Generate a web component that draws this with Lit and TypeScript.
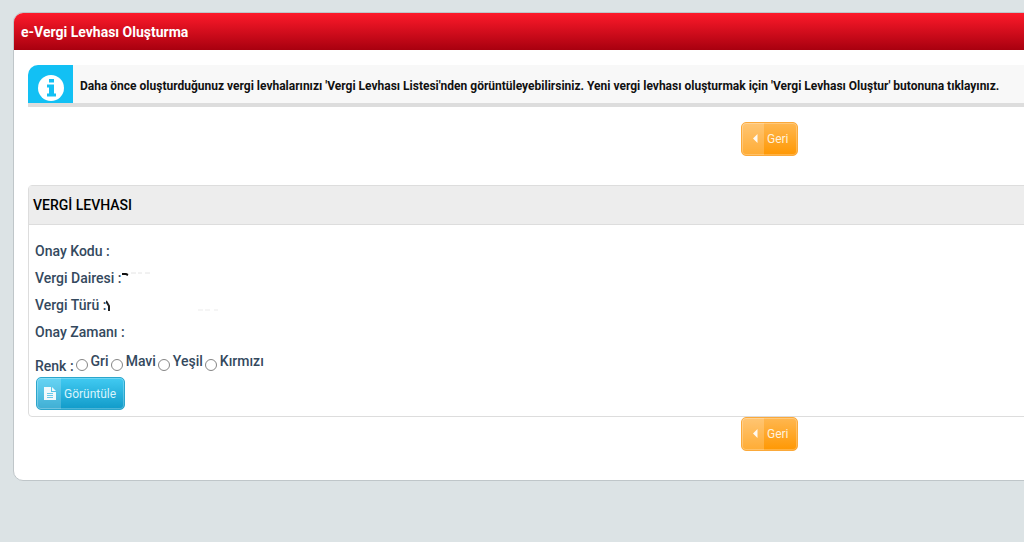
import { LitElement, html, css, svg } from "lit";
import { customElement, property } from "lit/decorators.js";

const arrowIcon = svg`<path d="M10.5 3 L6 7.500 L10.500 12 Z" fill="#fff"/>`;
const documentIcon = svg`<path d="M2 1 H9 V6 H14 V14 H2 Z M10 1 L14 5 H10 Z" fill="#fff"/><path d="M5 7.500 H11 M5 9.500 H11 M5 11.500 H11" stroke="#6fcbea" stroke-width="1"/>`;

@customElement("icon-button")
export class IconButton extends LitElement {
  @property() label = "";
  @property() tone = "orange";

  static styles = css`
    :host { display: inline-flex; }
    button {
      display: flex;
      align-items: stretch;
      height: 34px;
      padding: 0;
      border: 1px solid #fba93a;
      border-radius: 5px;
      overflow: hidden;
      background: linear-gradient(#ffb750, #ff9803);
      box-shadow: inset 0 0 0 1px rgba(255, 255, 255, 0.25);
      color: #fff1dc;
      font: 400 12px Roboto, sans-serif;
      cursor: pointer;
    }
    .blue {
      height: 33px;
      border-color: #2ba6cc;
      background: linear-gradient(#41caf2, #119bc9);
      color: #d9f4fc;
    }
    .icon {
      display: flex;
      align-items: center;
      justify-content: center;
      width: 22px;
      background: rgba(255, 255, 255, 0.2);
    }
    .blue .icon { padding-left: 2px; }
    svg { width: 16px; height: 16px; opacity: 0.92; }
    .orange svg { padding-left: 4px; }
    .text { display: flex; align-items: center; padding: 0 8px 0 3px; }
  `;

  render() {
    return html`<button type="button" class=${this.tone}>
      <span class="icon"><svg viewBox="0 0 16 16" aria-hidden="true">${this.tone === "blue" ? documentIcon : arrowIcon}</svg></span>
      <span class="text">${this.label}</span>
    </button>`;
  }
}

@customElement("app-root")
export class AppRoot extends LitElement {
  static styles = css`
    :host {
      display: block;
      box-sizing: border-box;
      min-height: 100vh;
      padding: 12px 0 24px 13px;
      overflow: hidden;
      background: #dce3e5;
      font-family: Roboto, sans-serif;
      color: #34495e;
    }
    * { box-sizing: border-box; }
    .panel {
      width: calc(150% - 4px);
      border: 1px solid #bfc6c9;
      border-radius: 10px;
      background: #fff;
      overflow: hidden;
    }
    h1 {
      margin: 0;
      padding: 0 7px;
      font-size: 14px;
      font-weight: 700;
      line-height: 38px;
      height: 37px;
      color: #fff;
      background: linear-gradient(#fd1a2a, #a8000f);
    }
    .body { padding: 15px 14px 29px; }
    .info {
      display: flex;
      height: 42px;
      border-bottom: 4px solid #ddd;
      border-top-left-radius: 10px;
      overflow: hidden;
      background: #f8f8f8;
      color: #111;
      font-size: 12px;
      font-weight: 700;
    }
    .badge {
      display: flex;
      align-items: end;
      justify-content: center;
      width: 45px;
      padding-bottom: 2px;
      background: #12c0f4;
    }
    .badge svg { width: 26px; height: 26px; }
    .info p { margin: 0; padding-left: 7px; line-height: 42px; white-space: nowrap; }
    .actions { display: flex; justify-content: center; }
    .top { padding: 15px 0 29px; }
    section { border: 1px solid #ddd; border-radius: 4px; }
    h2 {
      margin: 0;
      padding: 0 4px;
      font-size: 14px;
      font-weight: 500;
      line-height: 38px;
      color: #000;
      background: #ededed;
      border-bottom: 1px solid #ddd;
    }
    .fields { padding: 13px 6px 6px; font-size: 14px; font-weight: 500; }
    dl { margin: 0; }
    .row { display: flex; height: 27px; line-height: 27px; }
    dd { margin: 0; }
    dd svg { display: block; width: 120px; height: 27px; }
    fieldset { display: flex; height: 31px; margin: 0; padding: 0; border: 0; }
    .caption { padding-right: 2px; line-height: 41px; }
    .choice { display: flex; padding-right: 2px; line-height: 30px; }
    input {
      appearance: none;
      width: 12px;
      height: 12px;
      margin: 13px 3px 0 0;
      border: 1px solid #858585;
      border-radius: 50%;
      background: #fff;
    }
    input:checked { background: radial-gradient(#34495e 40%, #fff 45%); }
    .submit { display: flex; padding-left: 1px; }
  `;

  render() {
    return html`
      <main class="panel">
        <h1>e-Vergi Levhası Oluşturma</h1>
        <div class="body">
          <div class="info">
            <span class="badge"><svg viewBox="0 0 26 26" aria-hidden="true">
              <circle cx="13" cy="13" r="13" fill="#fff"/>
              <path d="M11 4h5v3.500h-5z M9 9.500h7v9h2v3H9v-3h2v-6H9z" fill="#12c0f4"/>
            </svg></span>
            <p>Daha önce oluşturduğunuz vergi levhalarınızı 'Vergi Levhası Listesi'nden görüntüleyebilirsiniz. Yeni vergi levhası oluşturmak için 'Vergi Levhası Oluştur' butonuna tıklayınız.</p>
          </div>
          <div class="actions top"><icon-button label="Geri"></icon-button></div>
          <section>
            <h2>VERGİ LEVHASI</h2>
            <div class="fields">
              <dl>
                <div class="row"><dt>Onay Kodu :</dt><dd></dd></div>
                <div class="row"><dt>Vergi Dairesi :</dt><dd><svg viewBox="0 0 120 27" aria-hidden="true">
                  <path d="M0 9h4l2 1" fill="none" stroke="#111" stroke-width="2"/>
                  <path d="M9 8h5m2 0h4m3 0h5" stroke="#e4e4e4"/>
                </svg></dd></div>
                <div class="row"><dt>Vergi Türü :</dt><dd><svg viewBox="0 0 120 27" aria-hidden="true">
                  <path d="M0 9l3 5v5" fill="none" stroke="#222" stroke-width="2"/>
                  <path d="M92 18h5m2 0h5m4 0h4" stroke="#ebebeb"/>
                </svg></dd></div>
                <div class="row"><dt>Onay Zamanı :</dt><dd></dd></div>
              </dl>
              <fieldset aria-labelledby="renk">
                <span class="caption" id="renk">Renk :</span>
                ${["Gri", "Mavi", "Yeşil", "Kırmızı"].map(
                  (name) => html`<label class="choice"><input type="radio" name="renk" value=${name} />${name}</label>`
                )}
              </fieldset>
              <div class="submit"><icon-button tone="blue" label="Görüntüle"></icon-button></div>
            </div>
          </section>
          <div class="actions"><icon-button label="Geri"></icon-button></div>
        </div>
      </main>
    `;
  }
}
